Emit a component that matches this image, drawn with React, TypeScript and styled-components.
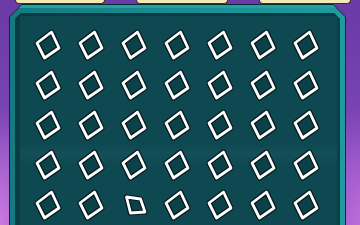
import React from 'react';
import styled, { createGlobalStyle } from 'styled-components';

const Global = createGlobalStyle`
  html, body { margin: 0; padding: 0; overflow: hidden; background: #6b3ba8; }
  body { font-family: "Liberation Sans", Arial, sans-serif; }
`;

const Page = styled.div`
  width: 360px;
  height: 225px;
  overflow: hidden;
  display: flex;
  flex-direction: column;
  background:
    radial-gradient(ellipse 40px 120px at 0% 100%, rgba(214, 130, 230, 0.8), rgba(214, 130, 230, 0) 100%),
    radial-gradient(ellipse 40px 120px at 100% 100%, rgba(200, 115, 225, 0.75), rgba(200, 115, 225, 0) 100%),
    linear-gradient(180deg, #6a3aa6 0%, #7a44b4 55%, #9a58c8 100%);
`;

const TabRow = styled.div`
  height: 10px;
  display: flex;
  align-items: flex-start;
  padding-left: 15px;
  gap: 31px;
`;

const Tab = styled.div<{ $w: number }>`
  width: ${(p) => p.$w}px;
  height: 3px;
  background: #f2e9b4;
  border: 1px solid #3b2c26;
  border-top: none;
  border-radius: 0 0 5px 5px;
`;

const chamfer = (c: number) =>
  `polygon(${c}px 0, calc(100% - ${c}px) 0, 100% ${c}px, 100% 100%, 0 100%, 0 ${c}px)`;

const Outline = styled.div`
  margin-left: 9px;
  width: 337px;
  flex: 1;
  padding: 1px 1px 0 1px;
  box-sizing: border-box;
  background: #0a2a31;
  clip-path: ${chamfer(13)};
  display: flex;
`;

const Band = styled.div`
  flex: 1;
  display: flex;
  padding: 8px 5px 0 5px;
  background: linear-gradient(90deg, #157a80 0%, #1b8d93 50%, #1f9ba0 100%);
  clip-path: ${chamfer(12)};
  box-shadow: inset 0 3px 0 #23a2a6;
`;

const Inner = styled.div`
  flex: 1;
  padding: 12px 0 0 11px;
  background:
    linear-gradient(180deg, rgba(255,255,255,0) 0%, rgba(255,255,255,0) 62%, rgba(120,200,200,0.06) 66%, rgba(255,255,255,0) 72%),
    #0e4851;
  box-shadow: inset 5px 0 0 #0b3c44, inset -3px 0 0 #0c4048, inset 0 3px 0 #0b3c44;
  clip-path: ${chamfer(6)};
`;

const Grid = styled.div`
  display: grid;
  grid-template-columns: repeat(7, 43px);
  grid-auto-rows: 40px;
`;

const Cell = styled.svg`
  width: 43px;
  height: 40px;
  display: block;
  overflow: visible;
`;

const normal = '25.5,7 33,23 18.5,33 11,18';
const flat = '14.5,12 28.5,14 33,27 18.5,28';

const Diamond: React.FC<{ pts: string }> = ({ pts }) => (
  <Cell viewBox="0 0 43 40">
    <polygon points={pts} fill="#0b424a" stroke="#06181c" strokeWidth={5.2} strokeLinejoin="round" />
    <polygon points={pts} fill="none" stroke="#ffffff" strokeWidth={2.8} strokeLinejoin="round" />
  </Cell>
);

export default function App() {
  const cells = Array.from({ length: 35 }, (_, i) => i);
  return (
    <>
      <Global />
      <Page>
        <TabRow>
          <Tab $w={88} />
          <Tab $w={90} />
          <Tab $w={90} />
        </TabRow>
        <Outline>
          <Band>
            <Inner>
              <Grid>
                {cells.map((i) => (
                  <Diamond key={i} pts={i === 30 ? flat : normal} />
                ))}
              </Grid>
            </Inner>
          </Band>
        </Outline>
      </Page>
    </>
  );
}
